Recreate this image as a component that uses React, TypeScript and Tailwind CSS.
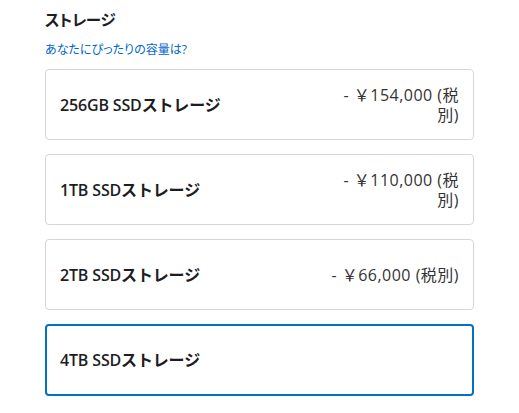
import React from 'react';

const options = [
  { label: '256GB SSDストレージ', price: '- ￥154,000 (税別)' },
  { label: '1TB SSDストレージ', price: '- ￥110,000 (税別)' },
  { label: '2TB SSDストレージ', price: '- ￥66,000 (税別)' },
  { label: '4TB SSDストレージ', price: '', selected: true },
];

export default function App() {
  return (
    <div
      className="min-h-screen bg-white pl-[45px] pr-[45px] pt-[10px] text-[#1d1d1f]"
      style={{ fontFamily: '"Open Sans", "Noto Sans CJK JP", sans-serif' }}
    >
      <h2 className="text-[15.5px] font-bold leading-[20px] tracking-[-0.02em] [font-feature-settings:'palt']">
        ストレージ
      </h2>
      <a
        href="#"
        className="mt-[12px] block text-[12px] leading-[16px] text-[#0066cc] [font-feature-settings:'palt']"
      >
        あなたにぴったりの容量は?
      </a>
      <div className="mt-[11px] flex w-[429px] flex-col gap-[14px]">
        {options.map((o) => (
          <div
            key={o.label}
            className={
              o.selected
                ? 'flex h-[72px] items-center justify-between rounded-[4px] border-2 border-[#0071c7] pl-[13px] pr-[13px]'
                : 'flex h-[71px] items-center justify-between rounded-[4px] border border-[#d6d6d6] pl-[14px] pr-[14px]'
            }
          >
            <span className="text-[16px] font-semibold tracking-[-0.01em] text-[#1d1d1f]">{o.label}</span>
            {o.price && (
              <span className="w-[136px] text-right text-[16px] leading-[20px] tracking-[0.03em] text-[#333]">
                {o.price}
              </span>
            )}
          </div>
        ))}
      </div>
    </div>
  );
}
